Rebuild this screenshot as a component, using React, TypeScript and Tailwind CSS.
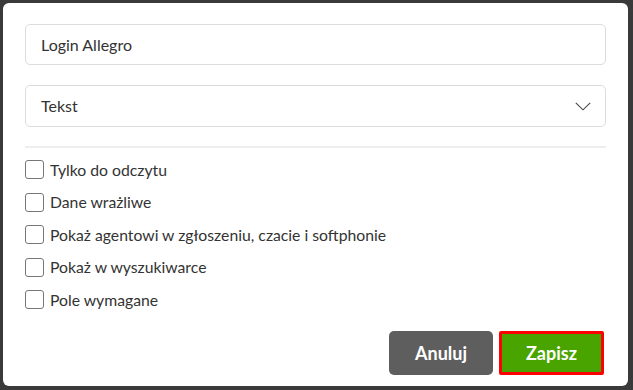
import React from "react";

const options = [
  "Tylko do odczytu",
  "Dane wrażliwe",
  "Pokaż agentowi w zgłoszeniu, czacie i softphonie",
  "Pokaż w wyszukiwarce",
  "Pole wymagane",
];

export default function App() {
  return (
    <div
      className="w-[633px] h-[390px] bg-[#3a3a3a] pt-[3px] pl-[3px] pr-[5px] pb-[4px]"
      style={{ fontFamily: "Lato, 'Open Sans', sans-serif" }}
    >
      <div className="h-full bg-white rounded-[6px] px-[22px] pt-[21px] flex flex-col">
        {/* Name field */}
        <div className="h-[41px] border border-[#dcdcdc] rounded-[5px] flex items-center px-[15px] text-[16px] text-[#333]">
          Login Allegro
        </div>

        {/* Type select */}
        <div className="mt-[20px] h-[42px] border border-[#dcdcdc] rounded-[5px] flex items-center justify-between pl-[15px] pr-[14px] text-[16px] text-[#333]">
          <span>Tekst</span>
          <svg width="16" height="9" viewBox="0 0 16 9" fill="none">
            <path d="M0.8 0.8 L8 7.8 L15.2 0.8" stroke="#444" strokeWidth="1.1" />
          </svg>
        </div>

        <div className="mt-[19px] h-[2px] bg-[#eeeeee]" />

        {/* Flags */}
        <div className="mt-[12px] flex flex-col gap-[13.5px]">
          {options.map((label) => (
            <label key={label} className="flex items-center gap-[6px] h-[19px] text-[15.75px] text-[#333]">
              <span className="w-[19px] h-[19px] shrink-0 rounded-[3px] border border-[#777] bg-white" />
              <span>{label}</span>
            </label>
          ))}
        </div>

        {/* Actions */}
        <div className="mt-[22px] flex justify-end gap-[6px] pr-[2px]">
          <button className="w-[104px] h-[44px] rounded-[5px] bg-[#5e5e5e] text-white font-bold text-[18px]">
            Anuluj
          </button>
          <button className="w-[105px] h-[44px] rounded-[2px] bg-[#49a400] border-[3px] border-[#ff0000] text-white font-bold text-[18px]">
            Zapisz
          </button>
        </div>
      </div>
    </div>
  );
}
